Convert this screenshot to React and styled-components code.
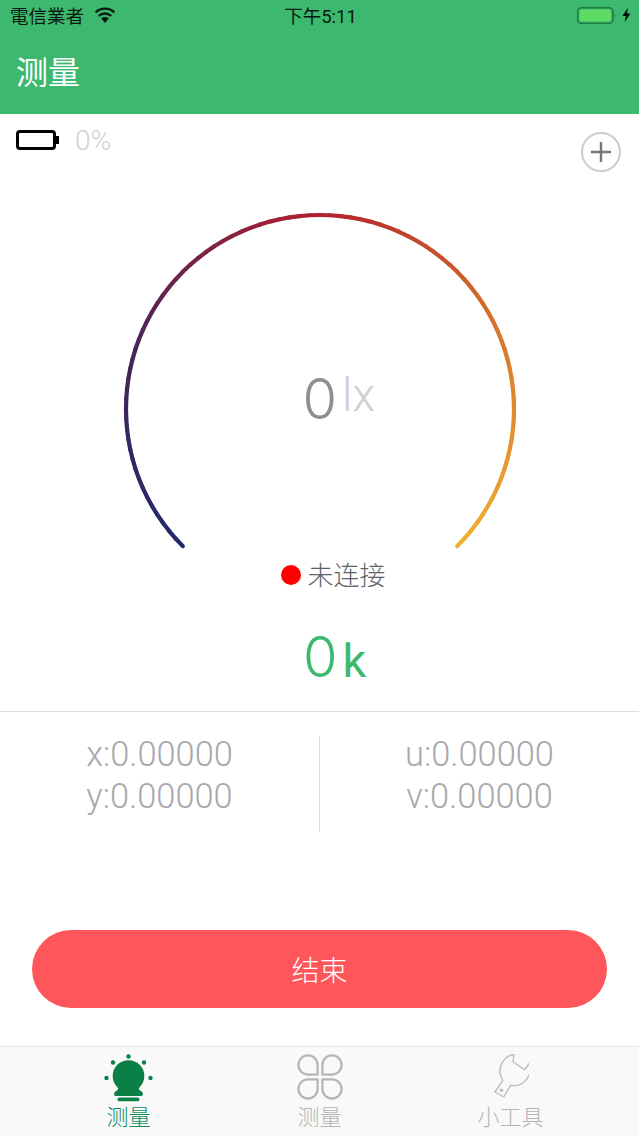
import styled, { createGlobalStyle } from "styled-components"

const GlobalStyle = createGlobalStyle`
  html, body { margin: 0; padding: 0; background: #fff; }
  body { font-family: "Roboto", "Noto Sans CJK SC", sans-serif; }
`

const Page = styled.div`
  width: 639px;
  height: 1136px;
  display: flex;
  flex-direction: column;
  overflow: hidden;
  background: #fff;
`
const Header = styled.header`
  height: 114px;
  box-sizing: border-box;
  background: #3cb96e;
  display: flex;
  flex-direction: column;
  flex-shrink: 0;
`
const StatusBar = styled.div`
  height: 32px;
  display: grid;
  grid-template-columns: 1fr auto 1fr;
  align-items: center;
  padding: 0 8px 2px 10px;
  box-sizing: border-box;
  color: #0b1a10;
  font-size: 18.5px;
`
const Carrier = styled.div`
  display: flex;
  align-items: center;
  gap: 10px;
`
const PowerGroup = styled.div`
  display: flex;
  justify-content: flex-end;
  align-items: center;
  gap: 6px;
`
const HeaderTitle = styled.h1`
  margin: 16px 0 0 16px;
  font-size: 32px;
  font-weight: 400;
  line-height: 50px;
  color: #fff;
`
const TopRow = styled.div`
  height: 100px;
  flex-shrink: 0;
  box-sizing: border-box;
  padding: 15px 18px 0 16px;
  display: flex;
  justify-content: space-between;
  align-items: flex-start;
`
const BatteryInfo = styled.div`
  display: flex;
  align-items: center;
  gap: 16px;
  height: 22px;
`
const BatteryText = styled.span`
  font-size: 28px;
  font-weight: 300;
  color: #cfcfd4;
`
const AddButton = styled.div`
  width: 40px;
  height: 40px;
  margin-top: 3px;
  box-sizing: border-box;
  border: 2px solid #cfcbd0;
  border-radius: 50%;
  display: flex;
  align-items: center;
  justify-content: center;
`
const GaugeWrap = styled.div`
  position: relative;
  width: 400px;
  height: 340px;
  align-self: center;
  flex-shrink: 0;
`
const GaugeSvg = styled.svg`
  display: block;
  overflow: visible;
`
const GaugeValue = styled.div`
  position: absolute;
  top: 149px;
  left: 183px;
  display: flex;
  align-items: flex-start;
  gap: 5px;
`
const BigNumber = styled.span`
  font-family: "Inter", "Roboto", sans-serif;
  font-size: 56px;
  font-weight: 300;
  line-height: 72px;
  color: ${(props) => props.$color};
`
const LuxUnit = styled.span`
  font-size: 46px;
  font-weight: 300;
  line-height: 64px;
  color: #cfcfd4;
`
const ConnectRow = styled.div`
  margin-top: 3px;
  height: 32px;
  padding-left: 28px;
  display: flex;
  justify-content: center;
  align-items: center;
  gap: 6px;
  font-size: 26px;
  font-weight: 300;
  color: #5f6368;
  flex-shrink: 0;
`
const Dot = styled.span`
  width: 20px;
  height: 20px;
  margin-top: 4px;
  border-radius: 50%;
  background: #fe0000;
`
const KelvinRow = styled.div`
  margin: 32px 0 18px;
  padding-left: 303px;
  height: 72px;
  display: flex;
  align-items: baseline;
  gap: 5px;
  flex-shrink: 0;
  color: #3cb96e;
`
const KelvinUnit = styled.span`
  font-size: 47px;
  font-weight: 400;
  line-height: 72px;
`
const Coords = styled.section`
  border-top: 1px solid #dedede;
  height: 219px;
  box-sizing: border-box;
  padding-top: 21px;
  display: grid;
  grid-template-columns: 1fr 1px 1fr;
  align-items: start;
  flex-shrink: 0;
`
const CoordColumn = styled.div`
  text-align: center;
  font-size: 34.4px;
  font-weight: 300;
  line-height: 42px;
  color: #a8a8ad;
`
const CoordDivider = styled.div`
  height: 96px;
  margin-top: 3px;
  background: #d9d9d9;
`
const ButtonRow = styled.div`
  flex: 1;
  padding: 0 32px;
`
const EndButton = styled.button`
  display: block;
  width: 575px;
  height: 78px;
  border: none;
  border-radius: 39px;
  background: #fe565a;
  color: #fff;
  font-family: inherit;
  font-size: 28px;
  font-weight: 300;
`
const TabBar = styled.nav`
  height: 90px;
  box-sizing: border-box;
  border-top: 1px solid #e6e6e6;
  background: #f9f9f9;
  display: grid;
  grid-template-columns: repeat(3, 191px);
  justify-content: center;
  flex-shrink: 0;
`
const Tab = styled.div`
  display: flex;
  flex-direction: column;
  align-items: center;
  padding-top: 7px;
  font-size: 22px;
  font-weight: 300;
  line-height: 26px;
  color: ${(props) => (props.$active ? "#0f8a5f" : "#b4b4b4")};
`
const TabIcon = styled.div`
  height: 48px;
  margin-bottom: 3px;
  display: flex;
  align-items: flex-start;
  justify-content: center;
`

const stops = [
  [0, [31, 42, 110]],
  [0.25, [75, 36, 85]],
  [0.5, [178, 32, 48]],
  [0.75, [214, 118, 42]],
  [1, [240, 178, 50]],
]

const mixColor = (t) => {
  for (let i = 1; i < stops.length; i++) {
    if (t <= stops[i][0]) {
      const [t0, c0] = stops[i - 1]
      const [t1, c1] = stops[i]
      const k = (t - t0) / (t1 - t0)
      return `rgb(${c0.map((v, n) => Math.round(v + (c1[n] - v) * k)).join(",")})`
    }
  }
  return "rgb(240,178,50)"
}

const COUNT = 90
const CX = 200
const CY = 195
const R = 194

const pointAt = (t) => {
  // runs clockwise from lower left (225deg) to lower right (-45deg)
  const a = ((225 - 270 * t) * Math.PI) / 180
  return [CX + R * Math.cos(a), CY - R * Math.sin(a)]
}

const GaugeArc = () => {
  const parts = []
  for (let i = 0; i < COUNT; i++) {
    const [x1, y1] = pointAt(i / COUNT)
    const [x2, y2] = pointAt((i + 1) / COUNT)
    parts.push(
      <line key={i} x1={x1} y1={y1} x2={x2} y2={y2} stroke={mixColor((i + 0.5) / COUNT)} strokeWidth="4.2" strokeLinecap="round" />
    )
  }
  return (
    <GaugeSvg width="400" height="340" viewBox="0 0 400 340">
      {parts}
    </GaugeSvg>
  )
}

const WifiIcon = () => (
  <svg width="22" height="16" viewBox="0 0 22 16">
    <path d="M11 16 L7.2 11.6 A5.6 5.6 0 0 1 14.8 11.6 Z" fill="#0b1a10" />
    <path d="M4.8 9 A9 9 0 0 1 17.2 9" fill="none" stroke="#0b1a10" strokeWidth="2.4" />
    <path d="M1.6 5.4 A13.6 13.6 0 0 1 20.4 5.4" fill="none" stroke="#0b1a10" strokeWidth="2.4" />
  </svg>
)

const ChargingBattery = () => (
  <svg width="39" height="17" viewBox="0 0 39 17">
    <rect x="0.75" y="0.75" width="35" height="15.5" rx="3.5" fill="none" stroke="#1f7a44" strokeWidth="1.5" />
    <rect x="2.5" y="2.5" width="31.5" height="12" rx="2" fill="#5cdc64" />
    <path d="M37 6 q1.6 2.5 0 5 Z" fill="#1f7a44" />
  </svg>
)

const Bolt = () => (
  <svg width="9" height="16" viewBox="0 0 10 16">
    <path d="M6.5 0 L0.5 9 H4.2 L3 16 L9.5 6.2 H5.6 Z" fill="#08120c" />
  </svg>
)

const SmallBattery = () => (
  <svg width="43" height="20" viewBox="0 0 43 20">
    <rect x="1.5" y="1.5" width="37" height="17" rx="2.5" fill="#fff" stroke="#000" strokeWidth="3" />
    <rect x="40" y="6" width="3" height="8" fill="#000" />
  </svg>
)

const PlusIcon = () => (
  <svg width="22" height="22" viewBox="0 0 22 22">
    <path d="M11 1 V21 M1 11 H21" stroke="#77767a" strokeWidth="2.4" />
  </svg>
)

const BulbIcon = () => (
  <svg width="50" height="48" viewBox="0.5 0 50 48" fill="#0a8046">
    <circle cx="25" cy="2.5" r="2.2" />
    <circle cx="9.5" cy="8.5" r="2.2" />
    <circle cx="40.5" cy="8.5" r="2.2" />
    <circle cx="3" cy="24" r="2.2" />
    <circle cx="47" cy="24" r="2.2" />
    <circle cx="25" cy="22" r="15.8" />
    <path d="M15 33 H35 Q35 36 37.5 37 Q39.5 38 39.5 40 Q39.5 42 37.5 42 H12.5 Q10.5 42 10.5 40 Q10.5 38 12.5 37 Q15 36 15 33 Z" />
    <rect x="14" y="43.5" width="22" height="3.8" rx="1.9" />
  </svg>
)

const CloverIcon = () => (
  <svg width="46" height="46" viewBox="0 0 48 48" fill="none" stroke="#b4b4b4" strokeWidth="2.3" strokeLinejoin="round">
    <path d="M21.5 21.5 H11.5 A10 10 0 1 1 21.5 11.5 Z" />
    <path d="M26.5 21.5 H36.5 A10 10 0 1 0 26.5 11.5 Z" />
    <path d="M21.5 26.5 H11.5 A10 10 0 1 0 21.5 36.5 Z" />
    <path d="M26.5 26.5 H36.5 A10 10 0 1 1 26.5 36.5 Z" />
  </svg>
)

const WrenchIcon = () => (
  <svg width="36" height="48" viewBox="-1.5 2 36 48" fill="none" stroke="#bcbcbc" strokeWidth="1.4" strokeLinejoin="round">
    <path d="M19.3 2.3 L18.7 10 L30.3 17.7 L35 11 A17 17 0 0 1 16 33.3 L9.3 45 L0.5 40 L8.3 28.3 A17 17 0 0 1 19.3 2.3 Z" />
    <circle cx="7" cy="38.3" r="1.8" fill="#bcbcbc" stroke="none" />
  </svg>
)

const App = () => {
  return (
    <Page>
      <GlobalStyle />
      <Header>
        <StatusBar>
          <Carrier>
            電信業者
            <WifiIcon />
          </Carrier>
          <span>下午5:11</span>
          <PowerGroup>
            <ChargingBattery />
            <Bolt />
          </PowerGroup>
        </StatusBar>
        <HeaderTitle>测量</HeaderTitle>
      </Header>
      <TopRow>
        <BatteryInfo>
          <SmallBattery />
          <BatteryText>0%</BatteryText>
        </BatteryInfo>
        <AddButton>
          <PlusIcon />
        </AddButton>
      </TopRow>
      <GaugeWrap>
        <GaugeArc />
        <GaugeValue>
          <BigNumber $color="#8e8e93">0</BigNumber>
          <LuxUnit>lx</LuxUnit>
        </GaugeValue>
      </GaugeWrap>
      <ConnectRow>
        <Dot />
        未连接
      </ConnectRow>
      <KelvinRow>
        <BigNumber $color="#3cb96e">0</BigNumber>
        <KelvinUnit>k</KelvinUnit>
      </KelvinRow>
      <Coords>
        <CoordColumn>
          x:0.00000
          <br />
          y:0.00000
        </CoordColumn>
        <CoordDivider />
        <CoordColumn>
          u:0.00000
          <br />
          v:0.00000
        </CoordColumn>
      </Coords>
      <ButtonRow>
        <EndButton>结束</EndButton>
      </ButtonRow>
      <TabBar>
        <Tab $active>
          <TabIcon>
            <BulbIcon />
          </TabIcon>
          测量
        </Tab>
        <Tab>
          <TabIcon>
            <CloverIcon />
          </TabIcon>
          测量
        </Tab>
        <Tab>
          <TabIcon>
            <WrenchIcon />
          </TabIcon>
          小工具
        </Tab>
      </TabBar>
    </Page>
  )
}

export default App
